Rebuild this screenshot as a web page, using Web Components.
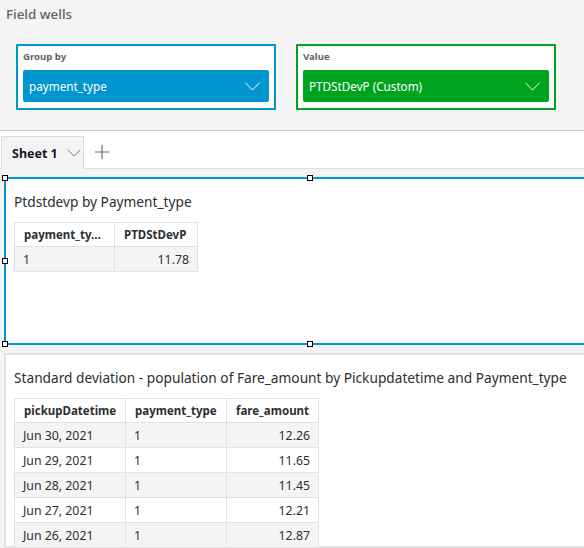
<!DOCTYPE html>
<html><head><meta charset="utf-8">
<style>
html,body{margin:0;padding:0;height:548px;overflow:hidden;background:#f4f4f4;font-family:"Noto Sans","Open Sans",sans-serif;color:#16191f}
</style></head><body>
<field-wells>
  <well-box label="Group by" value="payment_type" color="#0295cf"></well-box>
  <well-box label="Value" value="PTDStDevP (Custom)" color="#00a31e"></well-box>
</field-wells>
<sheet-tabs></sheet-tabs>
<sheet-area>
  <visual-card selected heading="Ptdstdevp by Payment_type">
    <data-table cols="100,83" aligns="l,r" head="payment_ty...|PTDStDevP" rows="1|11.78"></data-table>
  </visual-card>
  <visual-card heading="Standard deviation - population of Fare_amount by Pickupdatetime and Payment_type">
    <data-table cols="111,101,92" aligns="l,l,r" head="pickupDatetime|payment_type|fare_amount"
      rows="Jun 30, 2021|1|12.26;Jun 29, 2021|1|11.65;Jun 28, 2021|1|11.45;Jun 27, 2021|1|12.21;Jun 26, 2021|1|12.87"></data-table>
  </visual-card>
</sheet-area>
<script>
const chev=(s,c)=>`<svg width="${s}" height="${Math.round(s*.6)}" viewBox="0 0 15 9" fill="none" stroke="${c}" stroke-width="1"><path d="M.5 .8 7.5 8 14.5 .8"/></svg>`;
class FieldWells extends HTMLElement{constructor(){super();this.attachShadow({mode:'open'}).innerHTML=`<style>
:host{display:block;height:130px;background:#f4f4f4;border-bottom:1px solid #c9c9c9}
h2{margin:0;padding:5px 0 0 6px;font-size:13.4px;line-height:18px;font-weight:500;color:#5f6368}
.row{display:flex;gap:20px;padding:21px 0 0 16px}
</style><h2>Field wells</h2><div class="row"><slot></slot></div>`}}
class WellBox extends HTMLElement{constructor(){super();this.attachShadow({mode:'open'})}
connectedCallback(){const c=this.getAttribute('color');this.shadowRoot.innerHTML=`<style>
:host{display:flex;flex-direction:column;width:260px;height:66px;box-sizing:border-box;background:#fff;border:2px solid ${c};border-radius:1px;padding:4px 5px 6px}
.l{font-size:9.6px;line-height:13px;font-weight:700;color:#5f6368;height:20px}
.v{flex:1;display:flex;align-items:center;justify-content:space-between;background:${c};border-radius:2px;color:#fff;font-size:11.7px;padding:0 9px 0 6px}
</style><div class="l">${this.getAttribute('label')}</div><div class="v"><span>${this.getAttribute('value')}</span>${chev(15,'#fff')}</div>`}}
class SheetTabs extends HTMLElement{constructor(){super();this.attachShadow({mode:'open'}).innerHTML=`<style>
:host{display:flex;align-items:stretch;height:37px;background:#fff;border-bottom:1px solid #e0e0e0;padding-left:1px}
.t{display:flex;align-items:center;gap:9px;width:83px;box-sizing:border-box;margin-top:5px;margin-bottom:-1px;background:#f4f4f4;border:1px solid #dcdcdc;border-bottom:none;padding:0 0 0 10px;font-size:12.5px;font-weight:700;color:#16191f}
.p{display:flex;align-items:center;padding:4px 0 0 11px}
</style><div class="t"><span>Sheet 1</span>${chev(14,'#687078')}</div><div class="p"><svg width="14" height="14" viewBox="0 0 14 14" stroke="#687078" stroke-width="1.2"><path d="M7 0V14M0 7H14"/></svg></div>`}}
class SheetArea extends HTMLElement{constructor(){super();this.attachShadow({mode:'open'}).innerHTML=`<style>
:host{display:flex;flex-direction:column;gap:8px;padding:8px 0 0 4px;width:600px;box-sizing:border-box}
</style><slot></slot>`}}
class VisualCard extends HTMLElement{constructor(){super();this.attachShadow({mode:'open'})}
connectedCallback(){const s=this.hasAttribute('selected');
const pts=[[0,0],[305,0],[0,83],[0,166],[305,166]];
this.shadowRoot.innerHTML=`<style>
:host{display:block;position:relative;box-sizing:border-box;background:#fff;border:2px solid ${s?'#0295cf':'#e2e2e2'};padding:14px 0 0 8px;height:${s?'168px':'195px'}}
h3{margin:0 0 11px;font-size:13.7px;line-height:18px;font-weight:400;color:#2b2f33;white-space:nowrap}
i{position:absolute;width:4px;height:4px;background:#fff;border:1px solid #000;left:-4px;top:-4px}
</style><h3>${this.getAttribute('heading')}</h3><slot></slot>${s?pts.map(p=>`<i style="margin-left:${p[0]}px;margin-top:${p[1]}px"></i>`).join(''):''}`}}
class DataTable extends HTMLElement{constructor(){super();this.attachShadow({mode:'open'})}
connectedCallback(){const cols=this.getAttribute('cols').split(','),al=this.getAttribute('aligns').split(',');
const head=this.getAttribute('head').split('|'),rows=this.getAttribute('rows').split(';').map(r=>r.split('|'));
const td=(t,i)=>`<td style="width:${cols[i]}px;text-align:${al[i]=='r'?'right':'left'}">${t}</td>`;
this.shadowRoot.innerHTML=`<style>
:host{display:block}
table{border-collapse:collapse;table-layout:fixed;font-size:12.3px;color:#2b2f33}
td{border:1px solid #e2e2e2;height:25px;padding:0 8px;box-sizing:border-box;white-space:nowrap;overflow:hidden}
tr.h td{font-weight:700;font-size:11.5px;height:24px;padding-left:9px;text-align:left!important}
tr.z{background:#f4f4f4}
</style><table><tr class="h">${head.map(td).join('')}</tr>${rows.map((r,k)=>`<tr class="${k%2==0?'z':''}">${r.map(td).join('')}</tr>`).join('')}</table>`}}
customElements.define('field-wells',FieldWells);
customElements.define('well-box',WellBox);
customElements.define('sheet-tabs',SheetTabs);
customElements.define('sheet-area',SheetArea);
customElements.define('visual-card',VisualCard);
customElements.define('data-table',DataTable);
</script>
</body></html>
